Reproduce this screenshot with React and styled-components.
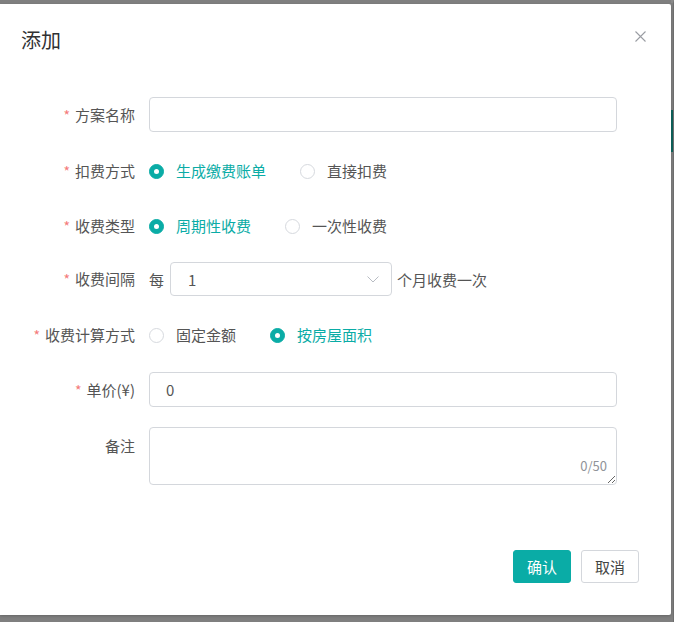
import React from 'react';
import styled, { createGlobalStyle } from 'styled-components';

const TEAL = '#0aaca6';

const GlobalStyle = createGlobalStyle`
  html, body { margin: 0; padding: 0; background: #7f7f7f; }
  body { font-family: "Noto Sans CJK SC", "Noto Sans", sans-serif; }
  * { box-sizing: border-box; }
`;

const Screen = styled.div`
  display: flex;
  width: 674px;
  height: 622px;
  overflow: hidden;
  background: #7f7f7f;
`;

const Dialog = styled.div`
  width: 671px;
  height: 611px;
  margin-top: 4px;
  flex-shrink: 0;
  background: #fff;
  border-radius: 0 2px 2px 0;
  display: flex;
  flex-direction: column;
  box-shadow: 0 1px 3px rgba(0, 0, 0, 0.2);
`;

const Sliver = styled.div`
  flex: 1;
  display: flex;
  flex-direction: column;
  border-top: 3px solid #8a8a8a;
  border-right: 1px solid #6e6e6e;
`;

const SliverBar = styled.div`
  margin-top: 107px;
  height: 42px;
  background: #0d5e57;
`;

const Header = styled.div`
  display: flex;
  justify-content: space-between;
  align-items: flex-start;
  padding: 22px 25px 0 21px;
`;

const Title = styled.div`
  font-size: 20px;
  line-height: 28px;
  color: #303133;
`;

const Close = styled.button`
  margin-top: 5px;
  width: 11px;
  height: 11px;
  padding: 0;
  border: none;
  background: transparent;
  display: flex;
  cursor: pointer;
`;

const Form = styled.div`
  display: flex;
  flex-direction: column;
  padding-top: 43px;
`;

const Row = styled.div`
  display: flex;
  align-items: ${p => (p.$top ? 'flex-start' : 'center')};
  min-height: 34px;
  margin-top: ${p => p.$mt || 0}px;
`;

const Label = styled.label`
  width: 135px;
  flex-shrink: 0;
  margin-right: 14px;
  text-align: right;
  font-size: 15px;
  line-height: ${p => (p.$top ? '38px' : '34px')};
  color: #555;
  white-space: nowrap;
`;

const Star = styled.span`
  color: #f47a7a;
  margin-right: 5px;
  font-size: 14px;
`;

const Input = styled.input`
  width: 468px;
  height: 35px;
  border: 1px solid #d4d7dc;
  border-radius: 4px;
  padding: 0 16px;
  font-family: inherit;
  font-size: 15px;
  color: #555;
  outline: none;
  background: #fff;
`;

const RadioGroup = styled.div`
  display: flex;
  align-items: center;
`;

const RadioItem = styled.label`
  display: inline-flex;
  align-items: center;
  margin-right: 34px;
  font-size: 15px;
  line-height: 34px;
  color: ${p => (p.$checked ? TEAL : '#555')};
  cursor: pointer;
`;

const Circle = styled.span`
  position: relative;
  width: 15px;
  height: 15px;
  border-radius: 50%;
  margin-right: 12px;
  border: 1px solid ${p => (p.$checked ? TEAL : '#d6d9de')};
  background: ${p => (p.$checked ? TEAL : '#fff')};
  &::after {
    content: '';
    display: ${p => (p.$checked ? 'block' : 'none')};
    position: absolute;
    left: 50%;
    top: 50%;
    width: 5px;
    height: 5px;
    margin: -2.5px 0 0 -2.5px;
    border-radius: 50%;
    background: #fff;
  }
`;

const Text = styled.span`
  font-size: 15px;
  color: #555;
  margin: ${p => p.$m || '0'};
`;

const Select = styled.div`
  width: 222px;
  height: 34px;
  border: 1px solid #d4d7dc;
  border-radius: 4px;
  display: flex;
  align-items: center;
  justify-content: space-between;
  padding: 0 12px 0 17px;
  font-size: 15px;
  color: #555;
`;

const AreaWrap = styled.div`
  position: relative;
  width: 468px;
  height: 58px;
`;

const Area = styled.textarea`
  width: 100%;
  height: 100%;
  border: 1px solid #d4d7dc;
  border-radius: 4px;
  padding: 6px 16px;
  font-family: inherit;
  font-size: 15px;
  color: #555;
  resize: vertical;
  outline: none;
  display: block;
`;

const Count = styled.span`
  position: absolute;
  right: 10px;
  bottom: 13px;
  font-size: 13px;
  line-height: 1;
  color: #909399;
`;

const Footer = styled.div`
  margin-top: auto;
  display: flex;
  justify-content: flex-end;
  gap: 10px;
  padding: 0 32px 32px 0;
`;

const Button = styled.button`
  height: 33px;
  padding: 0 13px;
  border-radius: 3px;
  font-family: inherit;
  font-size: 15px;
  cursor: pointer;
  border: 1px solid ${p => (p.$primary ? TEAL : '#d4d7dc')};
  background: ${p => (p.$primary ? TEAL : '#fff')};
  color: ${p => (p.$primary ? '#fff' : '#444')};
`;

const Radio = ({ checked, children }) => (
  <RadioItem $checked={checked}>
    <Circle $checked={checked} />
    {children}
  </RadioItem>
);

export default function App() {
  return (
    <>
      <GlobalStyle />
      <Screen>
        <Dialog>
          <Header>
            <Title>添加</Title>
            <Close aria-label="close">
              <svg width="11" height="11" viewBox="0 0 11 11">
                <path d="M0.5 0.5 L10.5 10.5 M10.5 0.5 L0.5 10.5" stroke="#9a9da3" strokeWidth="1.1" fill="none" />
              </svg>
            </Close>
          </Header>
          <Form>
            <Row>
              <Label><Star>*</Star>方案名称</Label>
              <Input defaultValue="" />
            </Row>
            <Row $mt={22}>
              <Label><Star>*</Star>扣费方式</Label>
              <RadioGroup>
                <Radio checked>生成缴费账单</Radio>
                <Radio>直接扣费</Radio>
              </RadioGroup>
            </Row>
            <Row $mt={21}>
              <Label><Star>*</Star>收费类型</Label>
              <RadioGroup>
                <Radio checked>周期性收费</Radio>
                <Radio>一次性收费</Radio>
              </RadioGroup>
            </Row>
            <Row $mt={19}>
              <Label><Star>*</Star>收费间隔</Label>
              <Text $m="0 6px 0 0">每</Text>
              <Select>
                <span>1</span>
                <svg width="12" height="7" viewBox="0 0 12 7">
                  <path d="M0.5 0.5 L6 6 L11.5 0.5" stroke="#b8bcc3" strokeWidth="1" fill="none" />
                </svg>
              </Select>
              <Text $m="0 0 0 5px">个月收费一次</Text>
            </Row>
            <Row $mt={22}>
              <Label><Star>*</Star>收费计算方式</Label>
              <RadioGroup>
                <Radio>固定金额</Radio>
                <Radio checked>按房屋面积</Radio>
              </RadioGroup>
            </Row>
            <Row $mt={20}>
              <Label><Star>*</Star>单价(¥)</Label>
              <Input defaultValue="0" />
            </Row>
            <Row $mt={20} $top>
              <Label $top>备注</Label>
              <AreaWrap>
                <Area maxLength={50} />
                <Count>0/50</Count>
              </AreaWrap>
            </Row>
          </Form>
          <Footer>
            <Button $primary>确认</Button>
            <Button>取消</Button>
          </Footer>
        </Dialog>
        <Sliver>
          <SliverBar />
        </Sliver>
      </Screen>
    </>
  );
}
